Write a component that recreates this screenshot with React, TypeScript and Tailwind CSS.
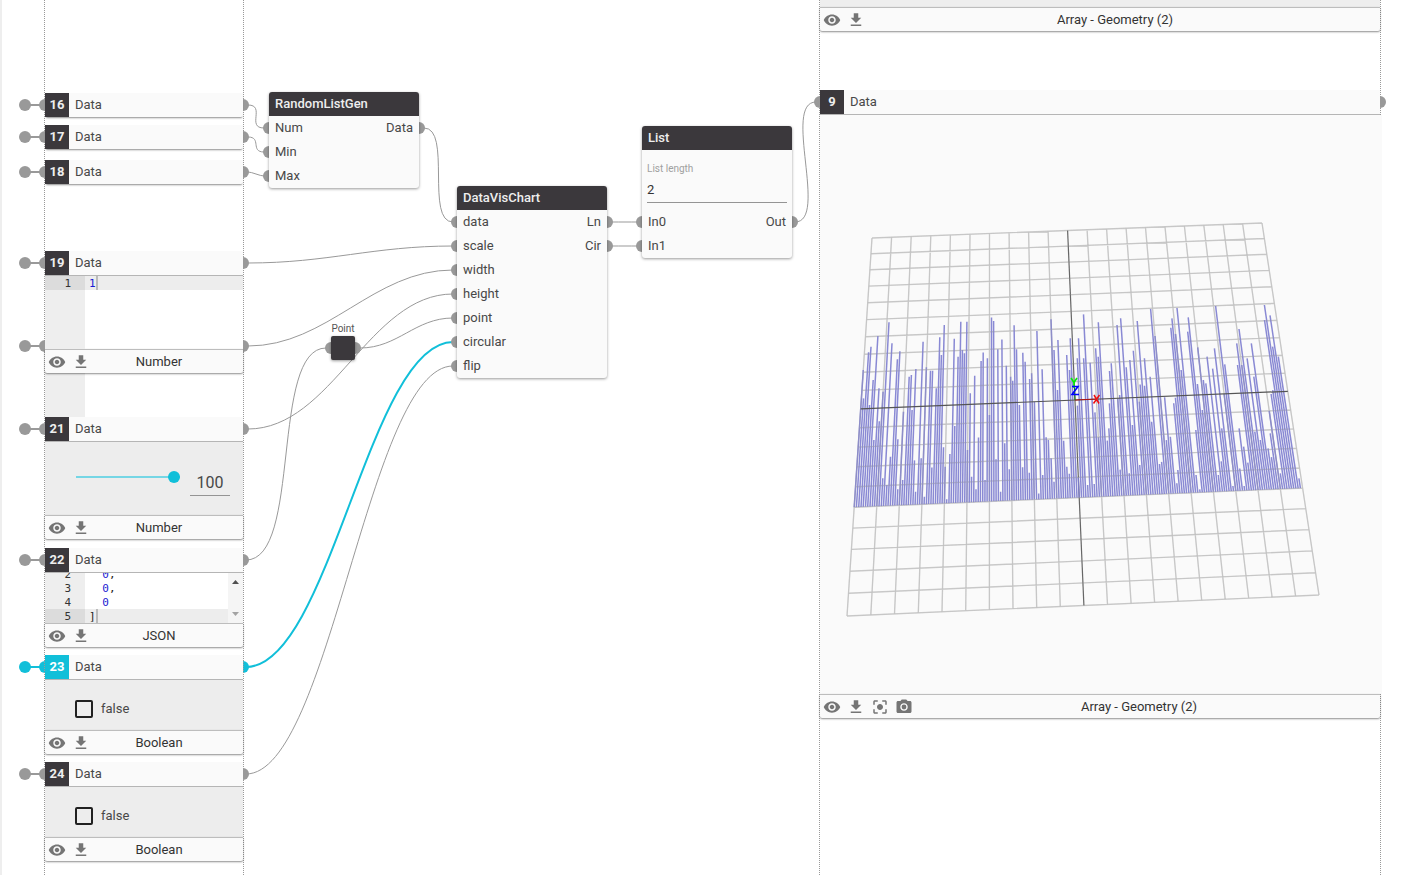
import type { ReactNode } from "react";
import { MdCenterFocusStrong, MdFileDownload, MdPhotoCamera, MdVisibility } from "react-icons/md";

const GREY = "#999999";
const CYAN = "#11bfd9";

type Wire = { from: [number, number]; to: [number, number]; bend: number; active?: boolean };

const WIRES: Wire[] = [
  { from: [248, 105], to: [264, 128], bend: 18 },
  { from: [248, 137], to: [264, 152], bend: 14 },
  { from: [248, 172], to: [264, 176], bend: 4 },
  { from: [424, 128], to: [453, 222], bend: 28 },
  { from: [248, 263], to: [453, 246], bend: 80 },
  { from: [248, 346], to: [453, 270], bend: 80 },
  { from: [248, 429], to: [453, 294], bend: 84 },
  { from: [246, 560], to: [326, 348], bend: 56 },
  { from: [360, 348], to: [453, 318], bend: 38 },
  { from: [246, 774], to: [453, 366], bend: 84 },
  { from: [246, 667], to: [453, 342], bend: 84, active: true },
  { from: [612, 222], to: [638, 222], bend: 8 },
  { from: [612, 246], to: [638, 246], bend: 8 },
  { from: [795, 222], to: [816, 102], bend: 34 },
];

const PORTS: [number, number][] = [
  [269, 128], [269, 152], [269, 176], [419, 128],
  [457, 222], [457, 246], [457, 270], [457, 294], [457, 318], [457, 342], [457, 366],
  [607, 222], [607, 246],
  [642, 222], [642, 246], [792, 222],
  [331, 348], [355, 348],
  [820, 102], [1380, 102],
];

const INPUT_ROWS = [105, 137, 172, 263, 346, 429, 560, 667, 774];

function Wires() {
  return (
    <svg className="pointer-events-none absolute inset-0 h-full w-full" aria-hidden="true">
      {WIRES.map(({ from, to, bend, active }, i) => (
        <path
          key={i}
          d={`M${from[0]} ${from[1]} C${from[0] + bend} ${from[1]} ${to[0] - bend} ${to[1]} ${to[0]} ${to[1]}`}
          fill="none"
          stroke={active ? CYAN : GREY}
          strokeWidth={active ? 2 : 1}
        />
      ))}
      {PORTS.map(([x, y]) => (
        <circle key={`${x}-${y}`} cx={x} cy={y} r={6} fill={GREY} />
      ))}
      {INPUT_ROWS.map((y) => {
        const color = y === 667 ? CYAN : GREY;
        return (
          <g key={y} fill={color} stroke="none">
            <circle cx={25} cy={y} r={6} />
            <rect x={30} y={y - 1} width={12} height={2} />
            <circle cx={45} cy={y} r={6} />
            <circle cx={243} cy={y} r={6} />
          </g>
        );
      })}
    </svg>
  );
}

function IconButton({ label, children }: { label: string; children: ReactNode }) {
  return (
    <button type="button" aria-label={label} className="flex h-6 w-6 items-center justify-center text-[#757575]">
      {children}
    </button>
  );
}

function Footer({ type, viewer = false }: { type: string; viewer?: boolean }) {
  return (
    <div className="flex h-6 items-center rounded-b-xs border-t border-[#bdbdbd] bg-[#fafafa] shadow-[0_1px_2px_rgba(0,0,0,0.45)]">
      <IconButton label="Toggle preview"><MdVisibility size={18} /></IconButton>
      <IconButton label="Download"><MdFileDownload size={18} /></IconButton>
      {viewer && (
        <>
          <IconButton label="Zoom to fit"><MdCenterFocusStrong size={18} /></IconButton>
          <IconButton label="Save image"><MdPhotoCamera size={18} /></IconButton>
        </>
      )}
      <span className="flex-1 pr-[18px] text-center text-[#333]">{type}</span>
    </div>
  );
}

function Header({ id, active = false, open = false }: { id: number; active?: boolean; open?: boolean }) {
  return (
    <div
      className={
        open
          ? "flex h-[25px] border-b border-[#b5b5b5] bg-[#fafafa]"
          : "flex h-6 rounded-b-xs bg-[#fafafa] shadow-[0_2px_2px_-1px_rgba(0,0,0,0.45)]"
      }
    >
      <span
        className={
          active
            ? "flex w-6 items-center justify-center bg-[#11bfd9] font-bold text-white"
            : "flex w-6 items-center justify-center bg-[#3b383c] font-bold text-[#eeeeee]"
        }
      >
        {id}
      </span>
      <span className="flex items-center px-1.5 text-[#484848]">Data</span>
    </div>
  );
}

function DataNode({
  id,
  place,
  active,
  type,
  viewer,
  children,
}: {
  id: number;
  place: string;
  active?: boolean;
  type?: string;
  viewer?: boolean;
  children?: ReactNode;
}) {
  return (
    <section className={`absolute ${place}`}>
      <Header id={id} active={active} open={Boolean(children)} />
      {children}
      {type && <Footer type={type} viewer={viewer} />}
    </section>
  );
}

function CodeLine({ n, current = false, children }: { n: number; current?: boolean; children: ReactNode }) {
  return (
    <div className={current ? "flex h-3.5 shrink-0 bg-[#ededed]" : "flex h-3.5 shrink-0"}>
      <span
        className={
          current
            ? "w-10 bg-[#dcdcdc] pr-3.5 text-right text-[#333]"
            : "w-10 bg-[#eeeeee] pr-3.5 text-right text-[#333]"
        }
      >
        {n}
      </span>
      <span className="whitespace-pre pl-1 text-[#222]">{children}</span>
      {current && <i className="h-3.5 w-0.5 bg-[#bbbbbb]" />}
    </div>
  );
}

const CODE = "font-['DejaVu_Sans_Mono',monospace] text-[11px] leading-4";

function Digit({ children }: { children: string }) {
  return <span className="text-[#1a1ad2]">{children}</span>;
}

function BooleanInput({ id }: { id: string }) {
  return (
    <div className="flex h-[50px] items-center bg-[#ededed] pt-2 pl-[30px]">
      <input
        id={id}
        type="checkbox"
        className="h-[18px] w-[18px] appearance-none rounded-xs border-2 border-[#212121] checked:bg-[#11bfd9]"
      />
      <label htmlFor={id} className="pl-2 text-[#484848]">false</label>
    </div>
  );
}

function Component({
  title,
  place,
  rows,
  children,
}: {
  title: string;
  place: string;
  rows: [string, string?][];
  children?: ReactNode;
}) {
  return (
    <section className={`absolute w-[150px] rounded-[3px] bg-[#fafafa] shadow-[0_1px_3px_rgba(0,0,0,0.4)] ${place}`}>
      <h2 className="flex h-6 items-center rounded-t-[3px] bg-[#3b383c] px-1.5 font-medium text-[#eeeeee]">{title}</h2>
      {children}
      {rows.map(([input, output]) => (
        <div key={input} className="flex h-6 items-center justify-between px-1.5 text-[#484848]">
          <span>{input}</span>
          {output && <span>{output}</span>}
        </div>
      ))}
    </section>
  );
}

/* ---- 3D view: plane z = 0 spanning -10..10, projected by a homography ---- */

type Pt = [number, number];

const TL: Pt = [872, 238];
const TR: Pt = [1262, 223];
const BR: Pt = [1319, 595];
const BL: Pt = [847, 616];

const H = (() => {
  const dx1 = TR[0] - BR[0], dx2 = BL[0] - BR[0], sx = TL[0] - TR[0] + BR[0] - BL[0];
  const dy1 = TR[1] - BR[1], dy2 = BL[1] - BR[1], sy = TL[1] - TR[1] + BR[1] - BL[1];
  const den = dx1 * dy2 - dx2 * dy1;
  const g = (sx * dy2 - dx2 * sy) / den;
  const h = (dx1 * sy - sx * dy1) / den;
  return {
    a: TR[0] - TL[0] + g * TR[0], b: BL[0] - TL[0] + h * BL[0], c: TL[0],
    d: TR[1] - TL[1] + g * TR[1], e: BL[1] - TL[1] + h * BL[1], f: TL[1],
    g, h,
  };
})();

function project(x: number, y: number): Pt {
  const u = (x + 10) / 20, v = (10 - y) / 20;
  const w = H.g * u + H.h * v + 1;
  return [(H.a * u + H.b * v + H.c) / w, (H.d * u + H.e * v + H.f) / w];
}

function unproject([px, py]: Pt): Pt {
  const a = H.a - px * H.g, b = H.b - px * H.h, c = px - H.c;
  const d = H.d - py * H.g, e = H.e - py * H.h, f = py - H.f;
  const det = a * e - b * d;
  return [((c * e - b * f) / det) * 20 - 10, 10 - ((a * f - c * d) / det) * 20];
}

/* Bar tips in thirds of a pixel, relative to (840, 210) and (1070, 210). */
const TIPS_WEST: Pt[] = [
  [69, 480], [72, 565], [77, 540], [85, 427], [89, 585], [94, 410], [99, 510], [103, 690], [114, 378], [117, 535],
  [127, 805], [131, 545], [140, 825], [147, 337], [152, 740], [156, 400], [172, 448], [173, 688], [180, 424],
  [173, 838], [188, 810], [191, 605], [209, 500], [214, 495], [218, 600], [227, 477], [227, 845], [243, 745],
  [249, 395], [254, 860], [260, 472], [272, 482], [278, 482], [283, 645], [290, 535], [300, 382], [305, 435],
  [313, 345], [310, 712], [316, 770], [320, 868], [330, 732], [343, 386], [347, 648], [356, 440], [363, 335],
  [368, 420], [374, 430], [381, 335], [383, 720], [391, 550], [395, 800], [405, 497], [408, 838], [417, 682],
  [424, 453], [431, 427], [435, 810], [443, 445], [449, 615], [456, 322], [462, 333], [468, 748], [474, 418],
  [482, 845], [487, 388], [495, 700], [499, 467], [508, 778], [514, 500], [518, 512], [523, 346], [529, 418],
  [539, 585], [549, 428], [548, 772], [556, 455], [570, 507], [568, 788], [575, 490], [583, 575], [592, 363],
  [598, 850], [606, 478], [608, 795], [618, 682], [625, 690], [633, 328], [633, 745], [642, 815], [643, 420],
  [652, 540], [655, 390], [660, 600], [671, 692], [682, 435], [682, 770], [688, 480], [691, 385], [697, 540],
  [713, 448],
];
const TIPS_EAST: Pt[] = [
  [2, 385], [22, 445], [26, 385], [42, 313], [41, 445], [61, 458], [53, 825], [71, 822], [78, 415], [85, 337],
  [85, 440], [93, 475], [118, 655], [119, 483], [121, 580], [124, 460], [142, 345], [152, 325], [150, 555],
  [157, 560], [169, 472], [180, 450], [188, 645], [191, 422], [203, 333], [209, 575], [208, 765], [224, 445],
  [225, 527], [241, 500], [245, 635], [243, 297], [256, 378], [262, 555], [269, 762], [285, 562], [290, 658],
  [301, 680], [304, 353], [307, 325], [312, 580], [317, 372], [321, 294], [320, 820], [323, 780], [334, 480],
  [341, 500], [354, 365], [355, 322], [378, 795], [378, 660], [384, 412], [388, 838], [397, 600], [401, 510],
  [408, 520], [412, 440], [429, 476], [434, 415], [437, 288], [442, 795], [456, 655], [464, 463], [487, 828],
  [501, 400], [503, 465], [507, 357], [508, 655], [515, 465], [522, 828], [532, 445], [533, 758], [544, 400],
  [551, 500], [555, 665], [557, 510], [570, 690], [583, 285], [585, 330], [600, 316], [594, 715], [601, 670],
  [604, 552], [608, 410], [612, 480], [619, 500], [626, 440], [630, 790], [637, 520], [685, 805],
];

const BAR_COUNT = 200;

const BARS: number[] = (() => {
  const tops: number[] = Array(BAR_COUNT).fill(Number.NaN);
  const put = (p: Pt) => {
    const [x, y] = unproject(p);
    const i = Math.min(BAR_COUNT - 1, Math.max(0, Math.round((x + 10) * 10)));
    if (Number.isNaN(tops[i]) || y > tops[i]) tops[i] = y;
  };
  TIPS_WEST.forEach(([x, y]) => put([840 + x / 3, 210 + y / 3]));
  TIPS_EAST.forEach(([x, y]) => put([1070 + x / 3, 210 + y / 3]));
  return tops.map((t, i) => (Number.isNaN(t) ? -4 + ((i * 37) % 50) / 10 : t));
})();

function segment(a: Pt, b: Pt) {
  return `M${a[0].toFixed(1)} ${a[1].toFixed(1)}L${b[0].toFixed(1)} ${b[1].toFixed(1)}`;
}

const STEPS = Array.from({ length: 21 }, (_, i) => i - 10).filter((i) => i !== 0);
const GRID = STEPS.map(
  (i) => segment(project(i, -10), project(i, 10)) + segment(project(-10, i), project(10, i)),
).join("");
const BAR_PATH = BARS.map((top, i) => segment(project(i / 10 - 10, -5), project(i / 10 - 10, top))).join("");

function GeometryView() {
  return (
    <svg
      viewBox="820 115 562 579"
      className="block h-[579px] w-[562px] bg-[#fafafa]"
      role="img"
      aria-label="Geometry preview"
    >
      <path d={GRID} stroke="#d0d0d0" strokeWidth={1.4} fill="none" />
      <path d={segment(project(0, -10), project(0, 10))} stroke="#666" strokeWidth={1.2} />
      <path d={BAR_PATH} stroke="#7c7ccf" strokeWidth={1.5} strokeOpacity={0.9} fill="none" />
      <path d={GRID} stroke="#aaaaaa" strokeOpacity={0.25} strokeWidth={1} fill="none" />
      <path d={segment(project(-10, 0), project(10, 0))} stroke="#555" strokeWidth={1.2} />
      <path d="M1075 400L1097 399" stroke="#b01010" />
      <path d="M1075 400L1074.500 386" stroke="#108010" />
      <path d="M1071 378L1074 382.500L1077 378M1074 382.500V388" stroke="#00ee00" strokeWidth={1.6} fill="none" />
      <path d="M1094 395L1099 403.500M1099.500 395L1093.500 403.500" stroke="#ee1010" strokeWidth={1.5} fill="none" />
      <path d="M1072 386.500H1078L1072 394.500H1079" stroke="#0000ff" strokeWidth={1.6} fill="none" />
    </svg>
  );
}

export default function App() {
  return (
    <main className="relative h-screen w-full overflow-hidden border-l-2 border-[#eeeeee] bg-white font-[Roboto,sans-serif] text-[13px] leading-4">
      <div className="absolute inset-y-0 -left-0.5 right-0">
        <Wires />

        <div className="absolute inset-y-0 left-11 w-[200px] border-x border-dotted border-[#999]" />
        <div className="absolute inset-y-0 left-[819px] w-[562px] border-x border-dotted border-[#999]" />

        <DataNode id={16} place="left-[45px] top-[93px] w-[198px]" />
        <DataNode id={17} place="left-[45px] top-[125px] w-[198px]" />
        <DataNode id={18} place="left-[45px] top-[160px] w-[198px]" />

        <div className="absolute left-[45px] top-[359px] h-[58px] w-[198px] bg-white">
          <div className="h-full w-10 bg-[#eeeeee]" />
        </div>

        <DataNode id={19} place="left-[45px] top-[251px] w-[198px]" type="Number">
          <div className={`flex h-[73px] flex-col bg-white ${CODE}`}>
            <CodeLine n={1} current><Digit>1</Digit></CodeLine>
            <div className="w-10 flex-1 bg-[#eeeeee]" />
          </div>
        </DataNode>

        <DataNode id={21} place="left-[45px] top-[417px] w-[198px]" type="Number">
          <div className="flex h-[73px] items-center gap-2.5 bg-[#ededed] pl-[31px]">
            <input
              type="range"
              min={0}
              max={100}
              defaultValue={100}
              aria-label="Value"
              className="mb-1 h-3 w-[104px] appearance-none bg-transparent [&::-webkit-slider-runnable-track]:h-0.5 [&::-webkit-slider-runnable-track]:bg-[#75d6e5] [&::-webkit-slider-thumb]:-mt-[5px] [&::-webkit-slider-thumb]:h-3 [&::-webkit-slider-thumb]:w-3 [&::-webkit-slider-thumb]:appearance-none [&::-webkit-slider-thumb]:rounded-full [&::-webkit-slider-thumb]:bg-[#11bfd9]"
            />
            <input
              type="text"
              defaultValue="100"
              aria-label="Number"
              className="mt-1.5 h-7 w-10 border-b border-[#949494] bg-transparent pt-0.5 text-center text-base text-[#484848]"
            />
          </div>
        </DataNode>

        <DataNode id={22} place="left-[45px] top-[548px] w-[198px]" type="JSON">
          <div className={`flex h-[50px] bg-white ${CODE}`}>
            <div className="flex flex-1 flex-col justify-end overflow-hidden">
              <CodeLine n={2}>{"  "}<Digit>0</Digit>,</CodeLine>
              <CodeLine n={3}>{"  "}<Digit>0</Digit>,</CodeLine>
              <CodeLine n={4}>{"  "}<Digit>0</Digit></CodeLine>
              <CodeLine n={5} current>]</CodeLine>
            </div>
            <div className="flex w-[15px] flex-col items-center justify-between bg-[#f5f5f5] py-[7px]">
              <svg width="7" height="4" aria-hidden="true"><path d="M0 4L3.500 0L7 4Z" fill="#505050" /></svg>
              <svg width="7" height="4" aria-hidden="true"><path d="M0 0L3.500 4L7 0Z" fill="#a3a3a3" /></svg>
            </div>
          </div>
        </DataNode>

        <DataNode id={23} active place="left-[45px] top-[655px] w-[198px]" type="Boolean">
          <BooleanInput id="bool-23" />
        </DataNode>
        <DataNode id={24} place="left-[45px] top-[762px] w-[198px]" type="Boolean">
          <BooleanInput id="bool-24" />
        </DataNode>

        <Component
          title="RandomListGen"
          place="left-[269px] top-[92px]"
          rows={[["Num", "Data"], ["Min"], ["Max"]]}
        />
        <Component
          title="DataVisChart"
          place="left-[457px] top-[186px]"
          rows={[["data", "Ln"], ["scale", "Cir"], ["width"], ["height"], ["point"], ["circular"], ["flip"]]}
        />
        <Component title="List" place="left-[642px] top-[126px]" rows={[["In0", "Out"], ["In1"]]}>
          <div className="flex h-[60px] flex-col px-[5px] pt-[11px]">
            <label htmlFor="list-length" className="text-[10px] text-[#a0a0a0]">List length</label>
            <input
              id="list-length"
              type="text"
              defaultValue="2"
              className="h-[26px] w-full border-b border-[#949494] bg-transparent text-[#333]"
            />
          </div>
        </Component>

        <figure className="absolute left-[331px] top-[322px] flex w-6 flex-col items-center">
          <figcaption className="h-3.5 text-[10px] leading-3.5 text-[#555]">Point</figcaption>
          <div className="h-6 w-6 rounded-xs bg-[#3b383c] shadow-[0_1px_3px_rgba(0,0,0,0.4)]" />
        </figure>

        <section className="absolute left-[820px] top-0 w-[560px]">
          <div className="h-[7px] bg-[#eeeeee]" />
          <Footer type="Array - Geometry (2)" />
        </section>

        <DataNode id={9} place="left-[820px] top-[90px] w-[560px]" type="Array - Geometry (2)" viewer>
          <GeometryView />
        </DataNode>
      </div>
    </main>
  );
}
